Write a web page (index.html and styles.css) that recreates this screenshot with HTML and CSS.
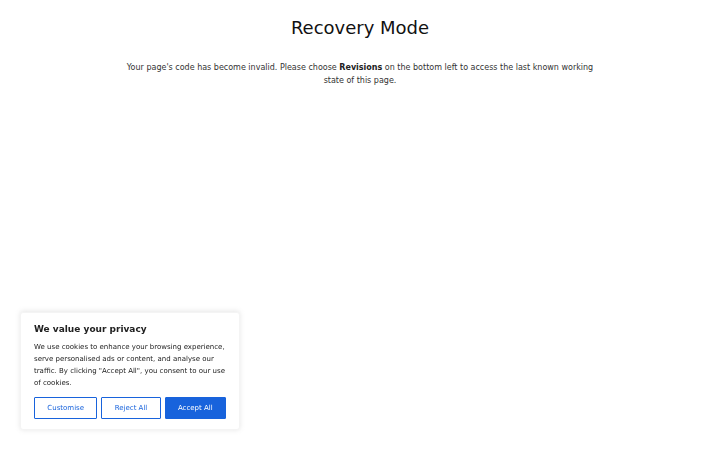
FILE: index.html
```html
<!DOCTYPE html>
<html lang="en">
<head>
<meta charset="utf-8">
<title>Recovery Mode</title>
<link rel="stylesheet" href="styles.css">
</head>
<body>
<main class="recovery">
  <h1 class="recovery-title">Recovery Mode</h1>
  <p class="recovery-text">Your page's code has become invalid. Please choose <strong>Revisions</strong> on the bottom left to access the last known working state of this page.</p>
</main>
<div class="consent">
  <p class="consent-title">We value your privacy</p>
  <p class="consent-desc">We use cookies to enhance your browsing experience, serve personalised ads or content, and analyse our traffic. By clicking "Accept All", you consent to our use of cookies.</p>
  <div class="consent-buttons">
    <button class="btn btn-outline">Customise</button>
    <button class="btn btn-outline">Reject All</button>
    <button class="btn btn-accept">Accept All</button>
  </div>
</div>
</body>
</html>
```
FILE: styles.css
```css
html, body {
  margin: 0;
  padding: 0;
  background: #fff;
  font-family: "DejaVu Sans", sans-serif;
}
.recovery {
  padding-top: 17px;
  text-align: center;
}
.recovery-title {
  margin: 0;
  font-size: 18px;
  font-weight: 400;
  color: #111;
  line-height: 21px;
}
.recovery-text {
  margin: 23px auto 0;
  max-width: 480px;
  font-size: 8px;
  line-height: 13px;
  color: #333;
}
.recovery-text strong {
  color: #222;
}
.consent {
  position: fixed;
  left: 20px;
  bottom: 20px;
  width: 220px;
  box-sizing: border-box;
  padding: 9px 13px 10px;
  background: #fff;
  border: 0.5px solid #f4f4f4;
  border-radius: 3px;
  box-shadow: 0 -0.5px 5px 0 rgba(172, 171, 171, 0.3);
}
.consent-title {
  margin: 0 0 5px;
  font-size: 9px;
  font-weight: 700;
  line-height: 14.4px;
  color: #212121;
}
.consent-desc {
  margin: 0;
  font-size: 7px;
  line-height: 12px;
  color: #212121;
}
.consent-buttons {
  display: flex;
  gap: 4px;
  margin-top: 8px;
}
.btn {
  flex: auto;
  box-sizing: border-box;
  height: 22px;
  padding: 4px;
  font-family: inherit;
  font-size: 7px;
  line-height: 12px;
  font-weight: 500;
  border-radius: 1px;
  border: 1px solid #1863dc;
  text-align: center;
}
.btn-outline {
  background: transparent;
  color: #1863dc;
}
.btn-accept {
  background: #1863dc;
  color: #fff;
}
```
